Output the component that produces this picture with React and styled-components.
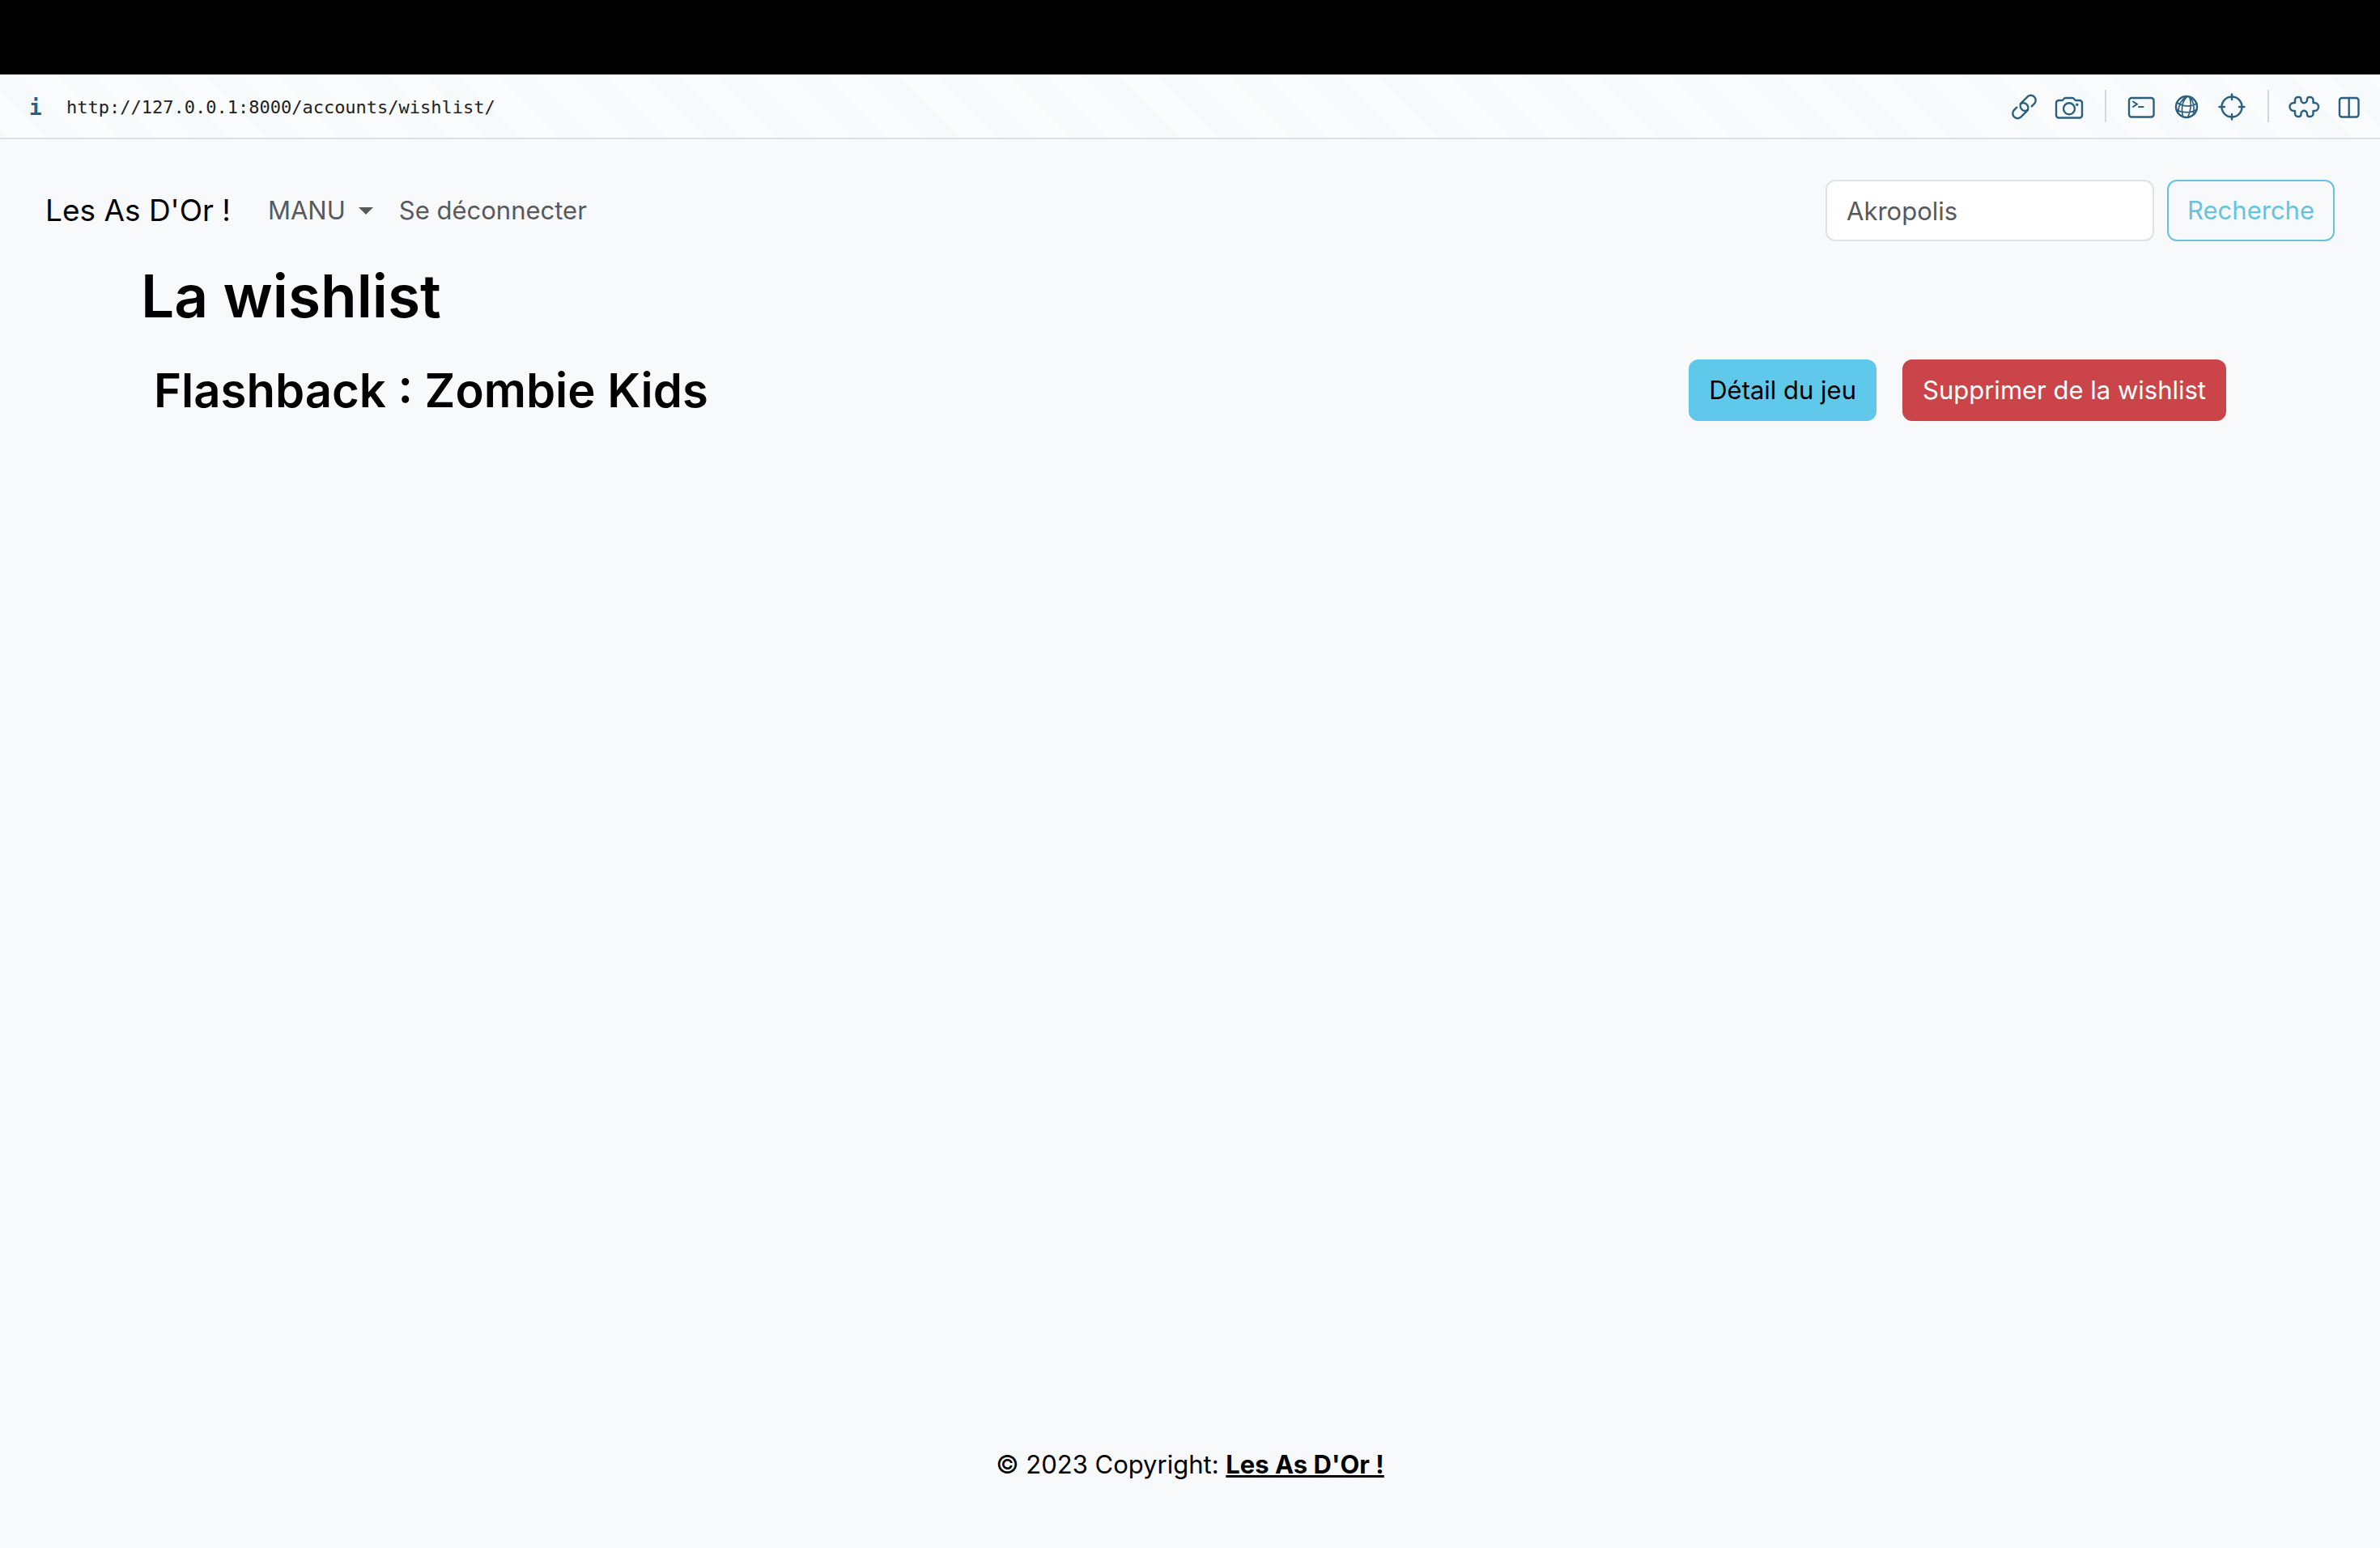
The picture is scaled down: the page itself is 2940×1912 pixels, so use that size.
import React from "react";
import styled, { createGlobalStyle } from "styled-components";

const Global = createGlobalStyle`
  * { box-sizing: border-box; }
  body { margin: 0; background: #f8f9fb; color: #000; font: 400 31px/48px Inter, "Liberation Sans", sans-serif; }
`;
const Page = styled.div`min-height: 100vh; display: flex; flex-direction: column;`;
const TopBand = styled.div`height: 92px; background: #000;`;
const AddressBar = styled.header`
  display: flex; align-items: center; height: 80px; padding: 0 18px 0 36px;
  border-bottom: 2px solid #dde0e2;
  background: repeating-linear-gradient(45deg, #f6fafb 0 8px, #fbfcfd 8px 40px, #f6fafb 40px 64px);
  color: #2c5f7e;
`;
const Info = styled.span`width: 46px; padding-top: 4px; font: 700 26px/32px "DejaVu Sans Mono", monospace;`;
const Url = styled.span`flex: 1; padding-top: 4px; color: #222; font: 400 22px/32px "DejaVu Sans Mono", monospace;`;
const Tools = styled.div`display: flex; align-items: center; gap: 16px;`;
const Tool = styled.button`
  display: flex; justify-content: center; width: 40px; padding: 0; border: 0; background: none; color: inherit;
  svg { width: 40px; height: 40px; fill: none; stroke: currentColor; stroke-width: 2.4; stroke-linecap: round; stroke-linejoin: round; }
`;
const Separator = styled.span`width: 2px; height: 40px; background: #cddae0; margin: 0 7px 0 8px;`;
const Nav = styled.nav`display: flex; align-items: center; padding: 50px 56px 0;`;
const Brand = styled.a`color: #000; font-size: 37px; line-height: 60px; text-decoration: none; margin-right: 46px;`;
const NavLink = styled.a`display: flex; align-items: center; color: #58595b; text-decoration: none; margin-right: 32px;`;
const Caret = styled.span`margin-left: 16px; border: 9px solid transparent; border-top-color: currentColor; border-bottom: 0;`;
const Search = styled.form`display: flex; gap: 16px; margin-left: auto;`;
const Field = styled.input`
  width: 406px; height: 76px; padding: 12px 24px; border: 2px solid #dee2e6; border-radius: 12px;
  background: #fff; color: #212529; font: inherit;
  &::placeholder { color: #58595b; opacity: 1; }
`;
const tones = {
  outline: "background: transparent; color: #66c3e0; border-color: #66c3e0;",
  info: "background: #5fc8eb; color: #000; border-color: #5fc8eb;",
  danger: "background: #ca444a; color: #fff; border-color: #ca444a;",
};
const Button = styled.button`
  height: 76px; padding: 0 23px; border: 2px solid; border-radius: 12px; font: inherit; white-space: nowrap;
  ${(p) => tones[p.$tone]}
`;
const Main = styled.main`width: 100%; max-width: 2640px; margin: 0 auto; padding: 20px 24px; flex: 1;`;
const Title = styled.h1`margin: 0 0 16px; font-size: 73px; line-height: 96px; font-weight: 600;`;
const Game = styled.article`display: flex; align-items: center; gap: 32px; padding: 14px 16px;`;
const GameName = styled.h2`margin: 0; flex: 1; font-size: 58px; line-height: 76px; font-weight: 600;`;
const Footer = styled.footer`padding: 48px; margin-bottom: 31px; text-align: center;`;
const FooterLink = styled.a`color: #000; font-weight: 700;`;

const chain = "M7 6H11.6a6 6 0 0 0 0-12H1.6a6 6 0 0 0-1 11.9";

const LinkIcon = () => (
  <svg viewBox="0 0 40 40">
    <g transform="translate(20.5 21) rotate(-45)">
      <path d={chain} />
      <path d={chain} transform="rotate(180)" />
    </g>
  </svg>
);
const CameraIcon = () => (
  <svg viewBox="0 0 40 40">
    <path d="M6.5 13H11c2 0 2-3 4.5-3H24c2.500 0 2.500 3 4.500 3h4.500a3 3 0 0 1 3 3v15.500a3 3 0 0 1-3 3H7a3 3 0 0 1-3-3V16a3 3 0 0 1 3-3z" />
    <circle cx="20" cy="23.3" r="7" />
    <circle cx="29.8" cy="18.3" r="1.7" fill="currentColor" stroke="none" />
  </svg>
);
const TerminalIcon = () => (
  <svg viewBox="0 0 40 40">
    <rect x="5" y="10" width="30.5" height="23.5" rx="3" />
    <path d="M10 14.5l5 3.200-5 3.200M17 21h5.500" strokeWidth="2" />
  </svg>
);
const GlobeIcon = () => (
  <svg viewBox="0 0 40 40">
    <circle cx="20" cy="21" r="13" />
    <path d="M21 8C15.500 13 13 22 15.500 33M24 9C26 17 25 27 21.500 34M21 8C14 11 10.500 17 9.500 28M24.500 9C29 15 30 22 28.500 30M8 15.500C14 20.500 25 21.500 32.500 17M7.500 24.500C14 28.500 25 29 32.500 24.500" strokeWidth="1.7" />
  </svg>
);
const TargetIcon = () => (
  <svg viewBox="0 0 40 40">
    <circle cx="20" cy="21" r="12.5" />
    <path d="M20 5.500V12M20 30v6.500M4.500 21H11M29 21h6.500" />
  </svg>
);
const PuzzleIcon = () => (
  <svg viewBox="0 0 40 40">
    <path d="M12.500 9H14c2 0 2.500 1.500 2.500 3.500a3.700 3.700 0 0 0 7.400 0C23.900 10.500 24.500 9 26.500 9H28a3.500 3.500 0 0 1 3.500 3.500V16H33a5 5 0 0 1 0 10h-1.500v3.500A3.500 3.500 0 0 1 28 33h-1.500c-2 0-2.600-1.500-2.600-3.500a3.700 3.700 0 0 0-7.400 0c0 2-.500 3.500-2.500 3.500H12.500A3.500 3.500 0 0 1 9 29.500V26H7.500a5 5 0 0 1 0-10H9v-3.500A3.500 3.500 0 0 1 12.500 9z" />
  </svg>
);
const PanelsIcon = () => (
  <svg viewBox="0 0 40 40">
    <rect x="8" y="10" width="23.5" height="23.5" rx="3" />
    <path d="M19.700 10v23.500" />
  </svg>
);

export default function App() {
  return (
    <Page>
      <Global />
      <TopBand />
      <AddressBar>
        <Info>i</Info>
        <Url>http://127.0.0.1:8000/accounts/wishlist/</Url>
        <Tools>
          <Tool aria-label="Copier le lien"><LinkIcon /></Tool>
          <Tool aria-label="Capture"><CameraIcon /></Tool>
          <Separator />
          <Tool aria-label="Console"><TerminalIcon /></Tool>
          <Tool aria-label="Réseau"><GlobeIcon /></Tool>
          <Tool aria-label="Inspecter"><TargetIcon /></Tool>
          <Separator />
          <Tool aria-label="Extensions"><PuzzleIcon /></Tool>
          <Tool aria-label="Vue partagée"><PanelsIcon /></Tool>
        </Tools>
      </AddressBar>
      <Nav>
        <Brand href="#">Les As D'Or !</Brand>
        <NavLink href="#">MANU<Caret /></NavLink>
        <NavLink href="#">Se déconnecter</NavLink>
        <Search>
          <Field aria-label="Recherche" placeholder="Akropolis" />
          <Button type="button" $tone="outline">Recherche</Button>
        </Search>
      </Nav>
      <Main>
        <Title>La wishlist</Title>
        <Game>
          <GameName>Flashback : Zombie Kids</GameName>
          <Button $tone="info">Détail du jeu</Button>
          <Button $tone="danger">Supprimer de la wishlist</Button>
        </Game>
      </Main>
      <Footer>© 2023 Copyright: <FooterLink href="#">Les As D'Or !</FooterLink></Footer>
    </Page>
  );
}
